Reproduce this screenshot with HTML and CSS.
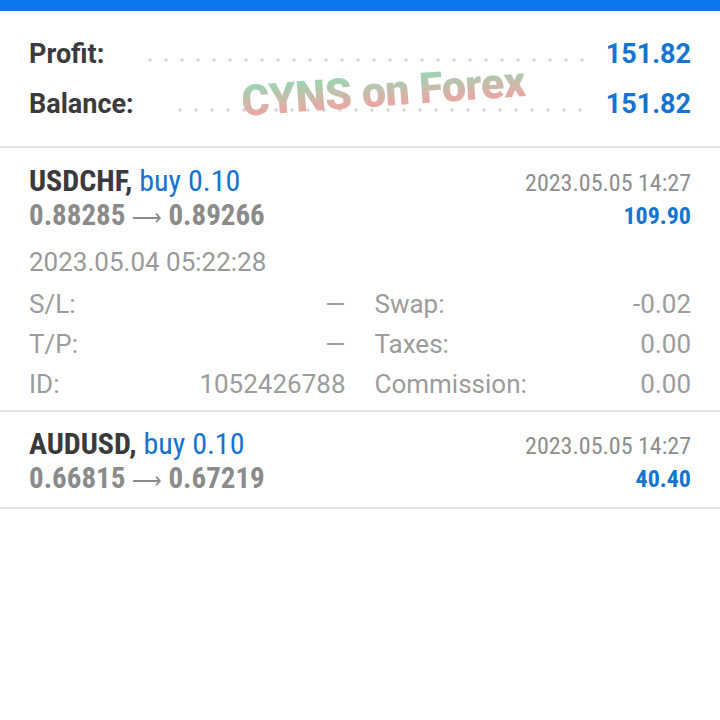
FILE: index.html
```html
<!DOCTYPE html>
<html lang="en">
<head>
	<meta charset="UTF-8">
	<title>Trade history</title>
	<link rel="stylesheet" href="styles.css">
</head>
<body>
	<div class="topbar"></div>

	<div class="summary">
		<div class="sumRow">
			<span class="sumLabel">Profit:</span>
			<span class="leader"></span>
			<span class="sumValue">151.82</span>
		</div>
		<div class="sumRow">
			<span class="sumLabel">Balance:</span>
			<span class="leader"></span>
			<span class="sumValue">151.82</span>
		</div>
		<div class="watermark">CYNS on Forex</div>
	</div>

	<div class="trade open">
		<div class="tradeHead">
			<div>
				<div class="title"><b>USDCHF,</b> <span class="side">buy 0.10</span></div>
				<div class="prices">0.88285 <span class="arrow">&#x27F6;</span> 0.89266</div>
			</div>
			<div class="right">
				<div class="closeTime">2023.05.05 14:27</div>
				<div class="profit">109.90</div>
			</div>
		</div>
		<div class="openTime">2023.05.04 05:22:28</div>
		<div class="details">
			<div class="kv"><span>S/L:</span><span>&mdash;</span></div>
			<div class="kv"><span>Swap:</span><span>-0.02</span></div>
			<div class="kv"><span>T/P:</span><span>&mdash;</span></div>
			<div class="kv"><span>Taxes:</span><span>0.00</span></div>
			<div class="kv"><span>ID:</span><span>1052426788</span></div>
			<div class="kv"><span>Commission:</span><span>0.00</span></div>
		</div>
	</div>

	<div class="trade">
		<div class="tradeHead">
			<div>
				<div class="title"><b>AUDUSD,</b> <span class="side">buy 0.10</span></div>
				<div class="prices">0.66815 <span class="arrow">&#x27F6;</span> 0.67219</div>
			</div>
			<div class="right">
				<div class="closeTime">2023.05.05 14:27</div>
				<div class="profit">40.40</div>
			</div>
		</div>
	</div>
</body>
</html>
```

FILE: styles.css
```css
body {
	margin: 0;
	background: #fff;
	font-family: Roboto, "Liberation Sans", sans-serif;
}

.topbar {
	height: 11px;
	background: #0a78ec;
}

/********** summary ****************/
.summary {
	position: relative;
	padding: 18px 29px 17px 29px;
	border-bottom: 2px solid #e4e4e4;
}
.sumRow {
	display: flex;
	align-items: center;
	height: 50px;
}
.sumLabel {
	font-size: 27px;
	font-weight: 700;
	color: #3b3b3d;
}
.leader {
	flex: 1;
	height: 4px;
	margin: 12px 22px 0 38px;
	background-image: radial-gradient(circle, #dcdcdc 1.5px, transparent 2px);
	background-size: 16px 4px;
	background-repeat: repeat-x;
}
.sumValue {
	font-size: 27px;
	font-weight: 700;
	color: #1574d0;
}
.watermark {
	position: absolute;
	left: 241px;
	top: 55px;
	font-family: Roboto, "Liberation Sans", sans-serif;
	font-size: 43px;
	font-weight: 900;
	letter-spacing: -0.5px;
	transform: rotate(-4deg);
	background: linear-gradient(#84cba0 20%, #e3948f 75%);
	-webkit-background-clip: text;
	background-clip: text;
	color: transparent;
	opacity: 0.8;
}

/********** trades ****************/
.trade {
	padding: 15px 29px 10px 29px;
	border-bottom: 2px solid #e4e4e4;
}
.trade.open {
	padding-top: 16px;
	padding-bottom: 6px;
}
.tradeHead {
	display: flex;
	justify-content: space-between;
}
.title, .prices {
	font-family: "Roboto Condensed", "Liberation Sans Narrow", Roboto, sans-serif;
	font-stretch: condensed;
	font-size: 30px;
	line-height: 34px;
}
.title b {
	color: #3a3a3c;
}
.side {
	color: #1574d0;
}
.prices {
	font-size: 29px;
	font-weight: 700;
	color: #8b8b8b;
}
.arrow {
	font-family: "DejaVu Sans", sans-serif;
	font-weight: 400;
	font-size: 23px;
}
.right {
	text-align: right;
	font-family: "Roboto Condensed", "Liberation Sans Narrow", Roboto, sans-serif;
	font-stretch: condensed;
	padding-top: 2px;
}
.closeTime {
	font-size: 24px;
	line-height: 34px;
	color: #8e8e8e;
}
.profit {
	font-size: 24px;
	line-height: 32px;
	font-weight: 700;
	color: #1574d0;
}
.openTime {
	font-size: 26px;
	line-height: 40px;
	margin-top: 8px;
	color: #9a9a9a;
}
.details {
	display: grid;
	grid-template-columns: 1fr 1fr;
	column-gap: 29px;
	grid-auto-rows: 40px;
	margin-top: 2px;
	font-size: 26px;
	color: #9c9c9c;
}
.kv {
	display: flex;
	justify-content: space-between;
	align-items: center;
}
```
